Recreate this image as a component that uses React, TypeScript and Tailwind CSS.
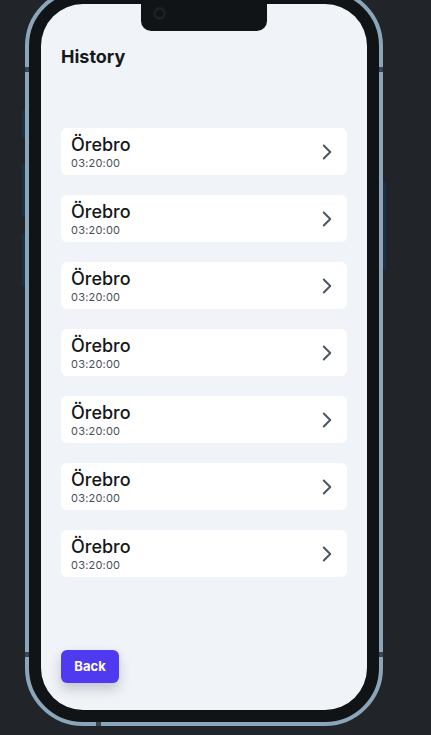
import { ChevronRight } from 'lucide-react';

const items = Array.from({ length: 7 }, () => ({ city: 'Örebro', time: '03:20:00' }));

function HistoryItem({ city, time }: { city: string; time: string }) {
  return (
    <div className="flex h-[47px] items-center justify-between rounded-md bg-white pl-[10px] pr-[7px]">
      <div className="flex flex-col">
        <span className="text-[18px] leading-[22px] font-medium text-[#15171a]">{city}</span>
        <span className="text-[11px] leading-[14px] tracking-[0.2px] text-[#4a4f57]">{time}</span>
      </div>
      <ChevronRight size={26} strokeWidth={1.8} className="text-[#4b5563]" />
    </div>
  );
}

export default function App() {
  return (
    <div className="h-[735px] w-[431px] overflow-hidden bg-[#212529] font-['Inter',sans-serif]">
      <div className="relative ml-[25px] mt-[-12px] h-[738px] w-[358px] rounded-[58px] border-[4px] border-[#8ba6bb] bg-[#111416] p-[12px]">
        {/* side buttons */}
        <div className="absolute left-[-7px] top-[118px] h-[28px] w-[3px] bg-[#1b3040]" />
        <div className="absolute left-[-7px] top-[172px] h-[52px] w-[3px] bg-[#1b3040]" />
        <div className="absolute left-[-7px] top-[242px] h-[52px] w-[3px] bg-[#1b3040]" />
        <div className="absolute right-[-7px] top-[190px] h-[87px] w-[3px] bg-[#1b3040]" />
        {/* antenna bands */}
        <div className="absolute left-[-4px] top-[75px] h-[5px] w-[4px] bg-[#394550]" />
        <div className="absolute right-[-4px] top-[75px] h-[5px] w-[4px] bg-[#394550]" />
        <div className="absolute left-[-4px] top-[660px] h-[5px] w-[4px] bg-[#394550]" />
        <div className="absolute right-[-4px] top-[660px] h-[5px] w-[4px] bg-[#394550]" />
        <div className="absolute bottom-[-4px] left-[67px] h-[4px] w-[5px] bg-[#394550]" />

        <div className="relative flex h-full flex-col overflow-hidden rounded-[42px] bg-[#f0f4f8] px-[20px] pb-[27px] pt-[39px]">
          {/* notch */}
          <div className="absolute left-[100px] top-0 h-[27px] w-[126px] rounded-b-[10px] bg-[#111416]">
            <div className="absolute left-[12px] top-[3px] h-[13px] w-[13px] rounded-full bg-[#1d2124] p-[3px]">
              <div className="h-full w-full rounded-full bg-[#111416]" />
            </div>
          </div>

          <h1 className="text-[18px] leading-[28px] font-bold text-[#16181b]">History</h1>

          <div className="mt-[57px] flex flex-col gap-[20px]">
            {items.map((item, i) => (
              <HistoryItem key={i} city={item.city} time={item.time} />
            ))}
          </div>

          <div className="mt-auto">
            <button className="h-[33px] w-[58px] rounded-md bg-[#4f3aef] text-[13px] font-bold text-white shadow-[0_6px_12px_rgba(60,60,90,0.25)]">
              Back
            </button>
          </div>
        </div>
      </div>
    </div>
  );
}
